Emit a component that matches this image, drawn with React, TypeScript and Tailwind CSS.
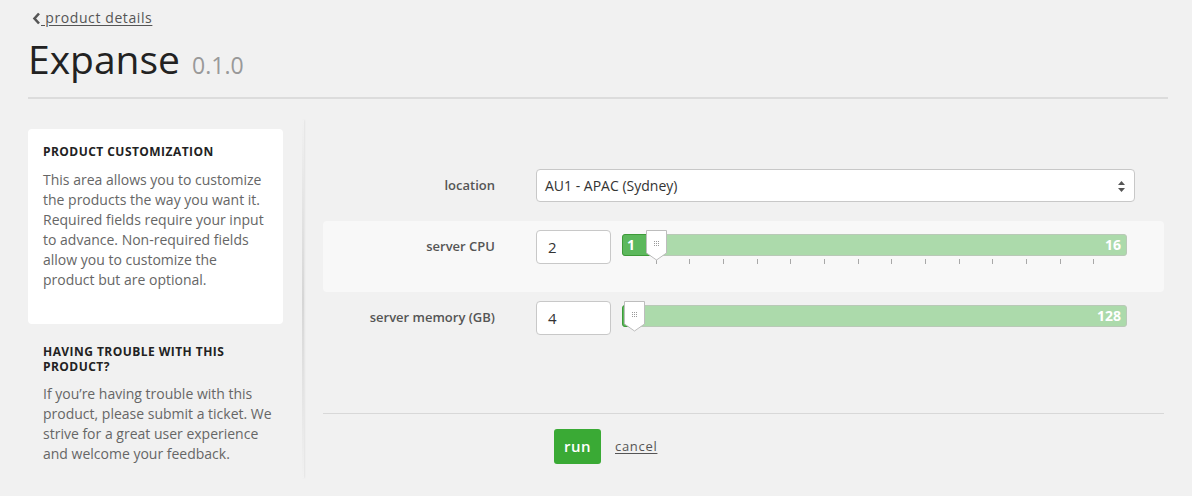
import * as React from "react";

const BAR_W = 505;

function Handle() {
  return (
    <svg width="21" height="31" viewBox="0 0 21 31" className="block">
      <path d="M0.5 0.5 H20.5 V23 L10.5 30 L0.5 23 Z" fill="#fff" stroke="#bdbdbd" />
      {[0, 1, 2].map(r =>
        [0, 1, 2].map(c => (
          <rect key={`${r}-${c}`} x={8 + c * 2} y={11 + r * 2} width="1" height="1" fill="#9a9a9a" />
        ))
      )}
    </svg>
  );
}

function RangeSlider({ min, max, value, ticks }: { min: number; max: number; value: number; ticks?: boolean }) {
  const pos = ((value - min) / (max - min)) * BAR_W;
  const tickList = ticks ? Array.from({ length: max - min - 1 }, (_, i) => ((i + 1) / (max - min)) * BAR_W) : [];
  return (
    <div className="relative ml-[11px] mt-[4px] h-[22px] w-[505px]">
      <div className="absolute inset-0 rounded-[3px] border border-[#b9c9b7] bg-[#acdaab]" />
      <div
        className="absolute left-0 top-0 h-[22px] rounded-l-[3px] border border-[#3e9a39] bg-[#5cb85c]"
        style={{ width: pos + 1 }}
      />
      {ticks ? (
        <span className="absolute left-[5px] top-[1px] text-[14px] font-bold leading-[20px] text-white">{min}</span>
      ) : null}
      <span className="absolute right-[6px] top-[1px] text-[14px] font-bold leading-[20px] text-white">{max}</span>
      {tickList.map((t, i) => (
        <div key={i} className="absolute top-[25px] h-[5px] w-px bg-[#a8a8a8]" style={{ left: t }} />
      ))}
      <div className="absolute top-[-4px]" style={{ left: pos - 10 }}>
        <Handle />
      </div>
    </div>
  );
}

function Label({ children }: { children: React.ReactNode }) {
  return (
    <div className="w-[172px] shrink-0 text-right text-[13px] font-semibold text-[#555]">{children}</div>
  );
}

export default function App() {
  return (
    <div
      className="min-h-[496px] w-full bg-[#f1f1f1] px-[28px] text-[#555]"
      style={{ fontFamily: '"Open Sans", "Liberation Sans", sans-serif' }}
    >
      <div className="pt-[8px]">
        <a className="flex items-center text-[14px] leading-[20px] tracking-[0.6px] text-[#555]">
          <svg className="ml-[4px]" width="9" height="13" viewBox="0 0 9 13">
            <path d="M7 1.5 L2.5 6.5 L7 11.5" fill="none" stroke="#555" strokeWidth="2.6" />
          </svg>
          <span className="underline underline-offset-2">&nbsp;product details</span>
        </a>
        <h1 className="mt-[7px] flex items-baseline text-[39px] leading-[48px] text-[#222]">
          Expanse
          <span className="ml-[12px] text-[23px] text-[#999]">0.1.0</span>
        </h1>
      </div>
      <div className="mt-[8px] h-[2px] w-[1140px] bg-[#dcdcdc]" />

      <div className="mt-[21px] flex">
        <aside className="w-[255px] shrink-0 pt-[9px]">
          <div className="h-[195px] rounded-[4px] bg-white px-[15px] pt-[15px]">
            <h3 className="text-[12px] font-bold leading-[16px] tracking-[0.45px] text-[#222]">
              PRODUCT CUSTOMIZATION
            </h3>
            <p className="mt-[10px] text-[14px] leading-[20px] text-[#666]">
              This area allows you to customize the products the way you want it. Required fields require your input to advance. Non-required fields allow you to customize the product but are optional.
            </p>
          </div>
          <div className="pl-[15px] pr-[6px] pt-[20px]">
            <h3 className="text-[12px] font-bold leading-[15px] tracking-[0.45px] text-[#222]">
              HAVING TROUBLE WITH THIS
              <br />
              PRODUCT?
            </h3>
            <p className="mt-[10px] text-[14px] leading-[20px] text-[#666]">
              If you’re having trouble with this product, please submit a ticket. We strive for a great user experience and welcome your feedback.
            </p>
          </div>
        </aside>

        <div className="ml-[19px] h-[358px] w-[2px] shrink-0 bg-gradient-to-b from-[#f1f1f1] via-[#d6d6d6] to-[#f1f1f1] shadow-[1px_0_2px_rgba(0,0,0,0.06)]" />

        <main className="ml-[19px] w-[845px] pt-[49px]">
          <div className="flex items-center">
            <Label>location</Label>
            <div className="relative ml-[41px] flex h-[33px] w-[599px] items-center rounded-[4px] border border-[#c8c8c8] bg-white pl-[8px] text-[14px] text-[#333]">
              AU1 - APAC (Sydney)
              <svg className="absolute right-[9px] top-[11px]" width="7" height="11" viewBox="0 0 7 11">
                <path d="M3.5 0 L7 4 H0 Z" fill="#555" />
                <path d="M3.5 11 L7 7 H0 Z" fill="#555" />
              </svg>
            </div>
          </div>

          <div className="mt-[19px] h-[71px] rounded-[4px] bg-[#f8f8f8] pt-[9px]">
            <div className="flex">
              <div className="flex h-[34px] items-center">
                <Label>server CPU</Label>
              </div>
              <div className="ml-[41px] flex h-[34px] w-[75px] items-center rounded-[4px] border border-[#c8c8c8] bg-white pl-[11px] text-[15px] text-[#333]">
                2
              </div>
              <RangeSlider min={1} max={16} value={2} ticks />
            </div>
          </div>

          <div className="pt-[9px]">
            <div className="flex">
              <div className="flex h-[34px] items-center">
                <Label>server memory (GB)</Label>
              </div>
              <div className="ml-[41px] flex h-[34px] w-[75px] items-center rounded-[4px] border border-[#c8c8c8] bg-white pl-[11px] text-[15px] text-[#333]">
                4
              </div>
              <RangeSlider min={1} max={128} value={4} />
            </div>
          </div>

          <div className="mt-[78px] h-px w-full bg-[#d8d8d8]" />

          <div className="mt-[15px] flex items-center pl-[231px]">
            <button className="h-[35px] w-[47px] rounded-[3px] bg-[#3aaa35] text-[15px] font-semibold tracking-[0.5px] text-white">
              run
            </button>
            <a className="ml-[14px] text-[13px] tracking-[0.7px] text-[#555] underline underline-offset-2">cancel</a>
          </div>
        </main>
      </div>
    </div>
  );
}
